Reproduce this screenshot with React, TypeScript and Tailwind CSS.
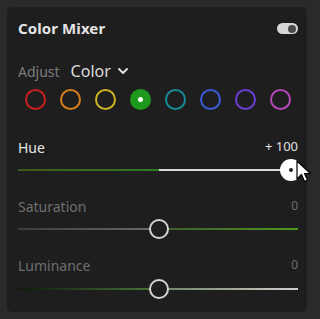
import { ChevronDown } from 'lucide-react'

const swatches = [
  { color: '#c8201e' },
  { color: '#d67d1c' },
  { color: '#cbb220' },
  { color: '#1d9a1d', active: true },
  { color: '#178a98' },
  { color: '#3a5bd6' },
  { color: '#6c3ed4' },
  { color: '#b548b8' },
]

function Cursor() {
  return (
    <svg width="16" height="24" viewBox="0 0 16 24" className="absolute left-[296px] top-[160px]">
      <path d="M1 1 L1 19 L5.5 14.5 L8.5 21.5 L11.5 20 L8.5 13.5 L14.5 13.5 Z" fill="#fff" stroke="#000" strokeWidth="1.2" strokeLinejoin="round" />
    </svg>
  )
}

export default function App() {
  return (
    <div className="w-[320px] h-[319px] bg-[#2a2a2a] p-[7px] font-['Noto_Sans',sans-serif] relative overflow-hidden">
      <div className="h-[305px] w-[300px] rounded-[5px] bg-[#1e1e1e] pl-[11px] pr-[9px]">
        {/* header */}
        <div className="flex items-center justify-between h-[42px] pt-[1px]">
          <span className="text-[15px] font-bold text-[#e4e4e4] tracking-[0.1px]">Color Mixer</span>
          <div className="w-[21px] h-[11px] rounded-full bg-[#d8d8d8] flex items-center justify-end pr-[2px]">
            <div className="w-[8px] h-[8px] rounded-full bg-[#4a4a4a]" />
          </div>
        </div>

        {/* adjust */}
        <div className="flex items-center h-[41px] pt-[3px]">
          <span className="text-[14px] text-[#7c7c7c]">Adjust</span>
          <span className="ml-[11px] text-[16px] text-[#dcdcdc]">Color</span>
          <ChevronDown size={16} strokeWidth={3} className="ml-[4px] text-[#dcdcdc]" />
        </div>

        {/* swatches */}
        <div className="flex items-center h-[22px] pl-[7px] gap-[14px] mt-[-2px]">
          {swatches.map((s, i) =>
            s.active ? (
              <div key={i} className="w-[21px] h-[21px] rounded-full flex items-center justify-center" style={{ background: s.color }}>
                <div className="w-[5px] h-[5px] rounded-full bg-white" />
              </div>
            ) : (
              <div key={i} className="w-[21px] h-[21px] rounded-full border-2" style={{ borderColor: s.color }} />
            )
          )}
        </div>

        {/* hue */}
        <div className="mt-[29px] flex items-center justify-between h-[16px]">
          <span className="text-[14px] text-[#e6e6e6]">Hue</span>
          <span className="text-[13px] text-[#e0e0e0]">+ 100</span>
        </div>
        <div className="relative h-[22px] mt-[4px]">
          <div className="absolute left-0 right-[10px] top-[10px] h-[2px] flex">
            <div className="w-[141px] h-full bg-gradient-to-r from-[#3d5a1e] to-[#2f7a22]" />
            <div className="flex-1 h-full bg-[#d8d8d8]" />
          </div>
          <div className="absolute left-[262px] top-0 w-[22px] h-[22px] rounded-full bg-white flex items-center justify-center">
            <div className="w-[4px] h-[4px] rounded-full bg-[#1e1e1e]" />
          </div>
        </div>

        {/* saturation */}
        <div className="mt-[17px] flex items-center justify-between h-[16px]">
          <span className="text-[14px] text-[#6e6e6e]">Saturation</span>
          <span className="text-[12px] text-[#6e6e6e]">0</span>
        </div>
        <div className="relative h-[20px] mt-[5px]">
          <div className="absolute left-0 right-0 top-[9px] h-[2px] flex">
            <div className="w-[141px] h-full bg-gradient-to-r from-[#3c3c3c] to-[#6a6a6a]" />
            <div className="flex-1 h-full bg-gradient-to-r from-[#3e5a2a] to-[#4c9a1c]" />
          </div>
          <div className="absolute left-[131px] top-0 w-[20px] h-[20px] rounded-full border-2 border-[#d4d4d4] bg-[#1e1e1e]" />
        </div>

        {/* luminance */}
        <div className="mt-[18px] flex items-center justify-between h-[16px]">
          <span className="text-[14px] text-[#6e6e6e]">Luminance</span>
          <span className="text-[12px] text-[#6e6e6e]">0</span>
        </div>
        <div className="relative h-[20px] mt-[6px]">
          <div className="absolute left-0 right-0 top-[9px] h-[2px] flex">
            <div className="w-[141px] h-full bg-gradient-to-r from-[#0f1a0c] to-[#4a7a3a]" />
            <div className="flex-1 h-full bg-gradient-to-r from-[#6e7e68] to-[#cfd2cc]" />
          </div>
          <div className="absolute left-[131px] top-0 w-[20px] h-[20px] rounded-full border-2 border-[#d4d4d4] bg-[#1e1e1e]" />
        </div>
      </div>
      <Cursor />
    </div>
  )
}
